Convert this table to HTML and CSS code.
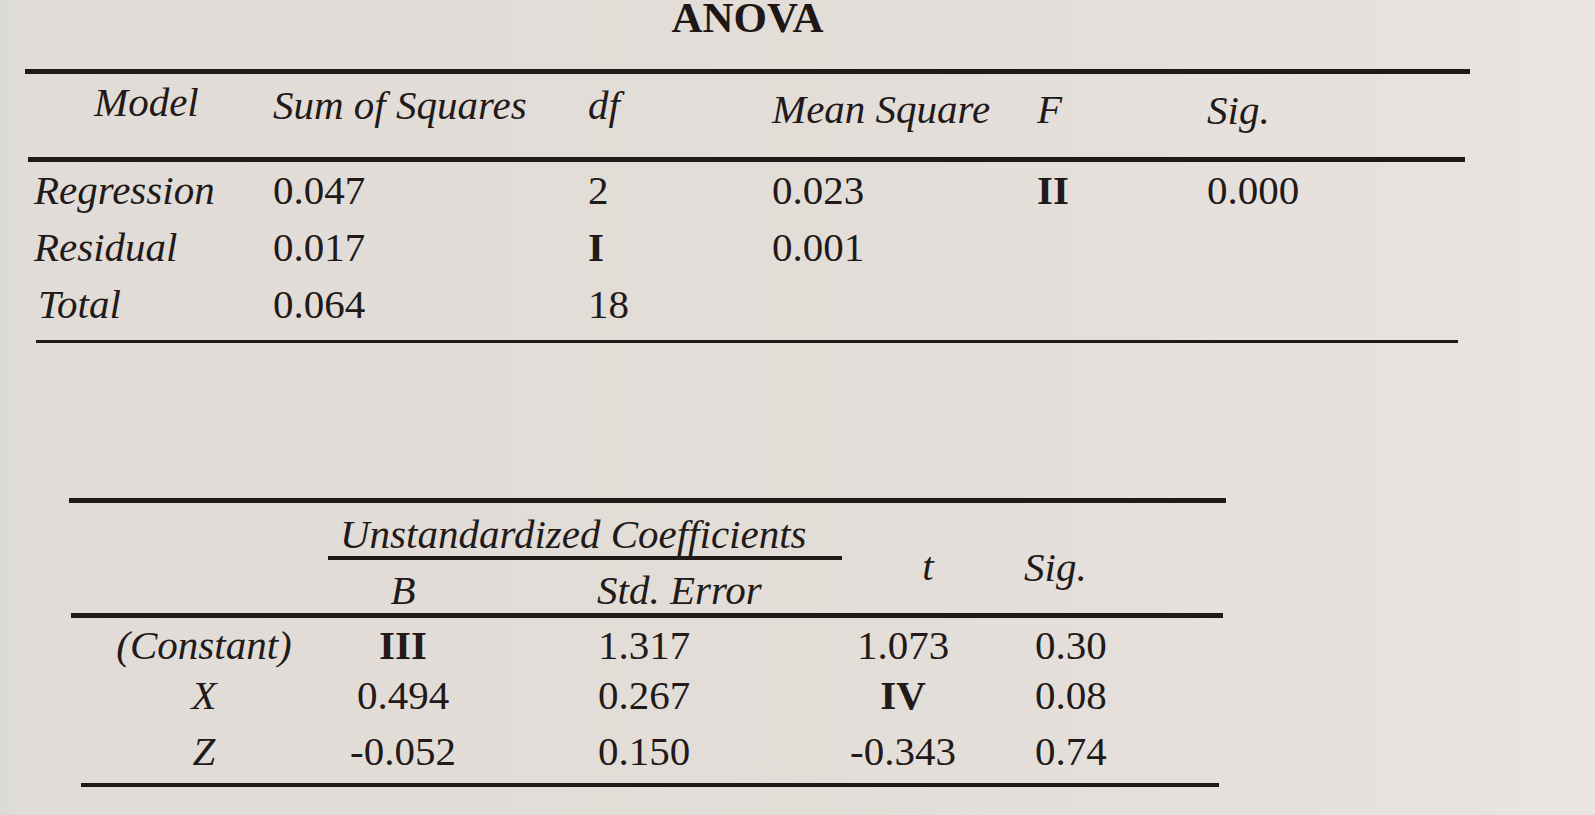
FILE: index.html
```html
<!DOCTYPE html>
<html lang="en">
<head>
<meta charset="utf-8">
<title>ANOVA</title>
<link rel="stylesheet" href="styles.css">
</head>
<body>
<div class="page">
  <section class="anova">
    <div class="title">ANOVA</div>
    <div class="rule r1"></div>
    <div class="t1-grid t1-head">
      <div class="h h-model">Model</div>
      <div class="h h-ss">Sum of Squares</div>
      <div class="h h-df">df</div>
      <div class="h h-ms">Mean Square</div>
      <div class="h h-f">F</div>
      <div class="h h-sig">Sig.</div>
    </div>
    <div class="rule r2"></div>
    <div class="t1-body">
      <div class="t1-grid t1-row">
        <div class="lbl">Regression</div>
        <div>0.047</div>
        <div>2</div>
        <div>0.023</div>
        <div class="b">II</div>
        <div>0.000</div>
      </div>
      <div class="t1-grid t1-row">
        <div class="lbl">Residual</div>
        <div>0.017</div>
        <div class="b">I</div>
        <div>0.001</div>
        <div></div>
        <div></div>
      </div>
      <div class="t1-grid t1-row">
        <div class="lbl lbl-total">Total</div>
        <div>0.064</div>
        <div>18</div>
        <div></div>
        <div></div>
        <div></div>
      </div>
    </div>
    <div class="rule r3"></div>
  </section>

  <section class="coef">
    <div class="rule r4"></div>
    <div class="t2-head">
      <div class="c-empty"></div>
      <div class="uc">Unstandardized Coefficients</div>
      <div class="subrule"></div>
      <div class="hb">B</div>
      <div class="hse">Std. Error</div>
      <div class="ht">t</div>
      <div class="hsig">Sig.</div>
    </div>
    <div class="rule r5"></div>
    <div class="t2-body">
      <div class="t2-grid t2-row r-a">
        <div class="c1">(Constant)</div>
        <div class="c2 b">III</div>
        <div class="c3">1.317</div>
        <div class="c4">1.073</div>
        <div class="c5">0.30</div>
      </div>
      <div class="t2-grid t2-row r-b">
        <div class="c1">X</div>
        <div class="c2">0.494</div>
        <div class="c3">0.267</div>
        <div class="c4 b">IV</div>
        <div class="c5">0.08</div>
      </div>
      <div class="t2-grid t2-row r-c">
        <div class="c1">Z</div>
        <div class="c2">-0.052</div>
        <div class="c3">0.150</div>
        <div class="c4">-0.343</div>
        <div class="c5">0.74</div>
      </div>
    </div>
    <div class="rule r6"></div>
  </section>
</div>
</body>
</html>
```

FILE: styles.css
```css
* { box-sizing: border-box; }

html, body {
  margin: 0;
  padding: 0;
}

body {
  width: 1595px;
  height: 815px;
  overflow: hidden;
  background: linear-gradient(to right, #d9dbd7 0px, #e1dcd7 24px, #e3ddd8 50%, #e6e1dd 85%, #e9e5e2 100%);
  font-family: "Liberation Serif", "Times New Roman", serif;
  font-size: 41px;
  color: #221a18;
}

.page {
  display: flex;
  flex-direction: column;
}

.rule {
  background: #211917;
}

/* ---------- ANOVA table ---------- */
.anova {
  margin-left: 25px;
  width: 1445px;
}

.title {
  text-align: center;
  font-weight: bold;
  font-size: 43px;
  line-height: 36px;
  height: 36px;
  color: #1f1715;
}

.r1 {
  height: 5px;
  margin-top: 32.5px;
}

.t1-grid {
  display: grid;
  grid-template-columns: 239px 315px 184px 265px 170px 1fr;
  padding-left: 9px;
}

.t1-head {
  height: 83px;
  font-style: italic;
  line-height: 46px;
}

.h { padding-top: 9.5px; white-space: nowrap; }
.h-model { padding-left: 60px; padding-top: 5.5px; }
.h-ss { padding-top: 8.5px; }
.h-df { padding-top: 8px; }
.h-ms { padding-top: 12.5px; }
.h-f { padding-top: 12.5px; }
.h-sig { padding-top: 13px; }

.r2 {
  height: 5px;
  margin-left: 3px;
  margin-right: 5px;
}

.t1-body {
  padding-bottom: 7px;
}

.t1-row {
  height: 57px;
  line-height: 57px;
  white-space: nowrap;
}

.lbl { font-style: italic; }
.lbl-total { padding-left: 4px; }

.b { font-weight: bold; }

.r3 {
  height: 3px;
  margin-left: 11px;
  margin-right: 12px;
}

/* ---------- Coefficients table ---------- */
.coef {
  margin-left: 69px;
  width: 1157px;
  margin-top: 155px;
}

.r4 { height: 5px; }

.t2-head {
  display: grid;
  grid-template-columns: 259px 150px 364px 122px 1fr;
  grid-template-rows: 53.5px 4px 52.5px;
  font-style: italic;
  line-height: 46px;
  white-space: nowrap;
}

.c-empty { grid-column: 1; grid-row: 1 / 4; }

.uc {
  grid-column: 2 / 4;
  grid-row: 1;
  padding-top: 8px;
  padding-left: 12px;
}

.subrule {
  grid-column: 2 / 4;
  grid-row: 2;
  background: #211917;
}

.hb {
  grid-column: 2;
  grid-row: 3;
  text-align: center;
  padding-top: 7px;
}

.hse {
  grid-column: 3;
  grid-row: 3;
  padding-top: 7px;
  padding-left: 119px;
}

.ht {
  grid-column: 4;
  grid-row: 1 / 4;
  text-align: center;
  padding-left: 50px;
  padding-top: 40.5px;
}

.hsig {
  grid-column: 5;
  grid-row: 1 / 4;
  padding-left: 60px;
  padding-top: 41.5px;
}

.r5 {
  height: 5px;
  margin-left: 2px;
  margin-right: 3px;
}

.t2-body {
  padding-top: 2.5px;
  padding-bottom: 1px;
}

.t2-grid {
  display: grid;
  grid-template-columns: 259px 150px 364px 122px 1fr;
  white-space: nowrap;
}

.r-a { height: 50px; line-height: 50px; }
.r-b { height: 50px; line-height: 50px; }
.r-c { height: 62px; line-height: 62px; }

.c1 { text-align: center; padding-left: 11px; font-style: italic; }
.c2 { text-align: center; }
.c3 { padding-left: 120px; }
.c4 { text-align: center; }
.c5 { padding-left: 71px; }

.r6 {
  height: 4px;
  margin-left: 12px;
  margin-right: 7px;
}
```
